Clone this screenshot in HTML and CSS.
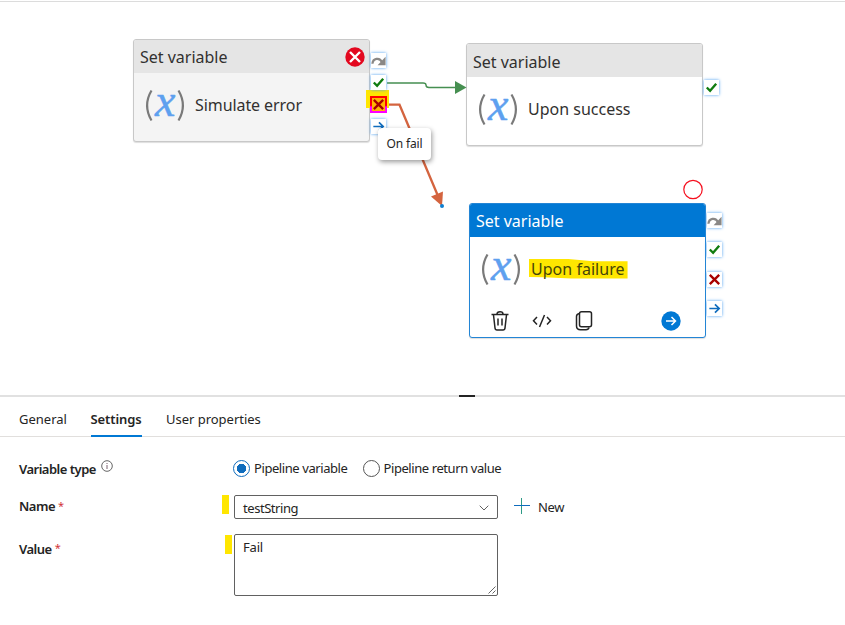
FILE: index.html
```
<!DOCTYPE html>
<html lang="en">
<head>
<meta charset="utf-8">
<title>Pipeline editor</title>
<link rel="stylesheet" href="styles.css">
</head>
<body>
<svg class="defs" width="0" height="0" aria-hidden="true">
  <symbol id="skip" viewBox="0 0 16 16"><path d="M1.500 11.500C2 5.500 9 4 12 10" fill="none" stroke="#8a8886" stroke-width="2.400"/><path d="M15.500 4V13H7Z" fill="#8a8886"/></symbol>
  <symbol id="check" viewBox="0 0 16 16"><path d="M3 8L6.500 11.500L13 4" fill="none" stroke="#107c10" stroke-width="2.500"/></symbol>
  <symbol id="cross" viewBox="0 0 16 16"><path d="M3 3L13 13M13 3L3 13" fill="none" stroke="#a80000" stroke-width="2.500"/></symbol>
  <symbol id="arrow" viewBox="0 0 16 16"><path d="M2.500 8H13M8.500 3.500L13 8L8.500 12.500" fill="none" stroke="#0f6cbd" stroke-width="1.800"/></symbol>
</svg>
<main class="canvas">
  <span class="marker marker-port"></span>
  <section class="node node-error">
    <header class="node-head">Set variable</header>
    <div class="node-body"><svg class="var-icon" viewBox="0 0 40 34"><path class="paren" d="M6.500 2.500Q-2.300 17.500 6.500 32.500M33.500 2.500Q42.300 17.500 33.500 32.500"/><text x="10" y="28" class="var-x">x</text></svg><span class="name-error">Simulate error</span></div>
    <svg class="error-badge" viewBox="0 0 20 20"><circle cx="10" cy="10" r="9.700" fill="#e3081f"/><path d="M5 5L15 15M15 5L5 15" stroke="#fff" stroke-width="2.400"/></svg>
  </section>
  <div class="ports ports-error">
    <svg class="port"><use href="#skip"/></svg>
    <svg class="port"><use href="#check"/></svg>
    <svg class="port port-active" viewBox="1 1 14 14"><use href="#cross" width="16" height="16"/></svg>
    <svg class="port"><use href="#arrow"/></svg>
  </div>
  <section class="node node-success">
    <header class="node-head">Set variable</header>
    <div class="node-body"><svg class="var-icon" viewBox="0 0 40 34"><path class="paren" d="M6.500 2.500Q-2.300 17.500 6.500 32.500M33.500 2.500Q42.300 17.500 33.500 32.500"/><text x="10" y="28" class="var-x">x</text></svg><span class="name-success">Upon success</span></div>
  </section>
  <div class="ports ports-success"><svg class="port"><use href="#check"/></svg></div>
  <svg class="wires" viewBox="0 0 845 395">
    <path d="M387 83H423Q426 83 426 85Q426 87.500 429 87.500H456" fill="none" stroke="#468f51" stroke-width="1.400"/>
    <path d="M455 81L466.500 87.500L455 94Z" fill="#468f51"/>
    <path d="M387 104.700H399.500L438 196" fill="none" stroke="#d4643f" stroke-width="2.300"/>
    <path d="M431 196.500L443 191.500L442 206Z" fill="#d4643f"/>
    <circle cx="442" cy="206" r="2" fill="#0f7fd0"/>
    <circle cx="693" cy="189.500" r="9.200" fill="none" stroke="#f5101f" stroke-width="1.200"/>
  </svg>
  <div class="tooltip">On fail</div>
  <section class="node node-failure">
    <header class="node-head">Set variable</header>
    <div class="node-body">
      <svg class="var-icon" viewBox="0 0 40 34"><path class="paren" d="M6.500 2.500Q-2.300 17.500 6.500 32.500M33.500 2.500Q42.300 17.500 33.500 32.500"/><text x="10" y="28" class="var-x">x</text></svg>
      <span class="name-failure">Upon failure</span>
    </div>
    <footer class="actions">
      <svg width="20" height="22" viewBox="0 0 20 22" fill="none" stroke="#242424" stroke-width="1.500"><path d="M1.500 4.500H18.500M7 4Q7 1.800 10 1.800Q13 1.800 13 4M3.500 5L5 18Q5.200 20 7 20H13Q14.800 20 15 18L16.500 5M8 8.500V15.500M12 8.500V15.500"/></svg>
      <svg width="20" height="22" viewBox="0 0 20 22" fill="none" stroke="#242424" stroke-width="1.500"><path d="M5 7L1.500 10.700L5 14.500M15 7L18.500 10.700L15 14.500M12.500 5L7.500 17"/></svg>
      <svg width="20" height="22" viewBox="0 0 20 22" fill="none" stroke="#242424" stroke-width="1.500"><rect x="5.500" y="1.800" width="12" height="15" rx="2"/><path d="M5.500 3.500Q2.500 4 2.500 6.500V16Q2.500 19.700 6.500 19.700H12Q14.500 19.700 15 17.500"/></svg>
      <svg class="go" width="20" height="22" viewBox="0 0 20 22"><circle cx="10" cy="11" r="9.700" fill="#0078d4"/><path d="M5 11H14.500M10.500 7L14.500 11L10.500 15" fill="none" stroke="#fff" stroke-width="1.500"/></svg>
    </footer>
  </section>
  <div class="ports ports-failure">
    <svg class="port"><use href="#skip"/></svg>
    <svg class="port"><use href="#check"/></svg>
    <svg class="port"><use href="#cross"/></svg>
    <svg class="port"><use href="#arrow"/></svg>
  </div>
</main>
<section class="panel">
  <div class="handle"></div>
  <nav class="tabs">
    <span class="tab tab-general">General</span>
    <span class="tab tab-active">Settings</span>
    <span class="tab tab-user">User properties</span>
  </nav>
  <form class="form">
    <div class="row row-type">
      <label class="label"><span class="label-type">Variable type</span><svg class="info" viewBox="0 0 12 12" fill="none" stroke="#555"><circle cx="6" cy="6" r="5.300" stroke-width=".9"/><path d="M6 5V9M6 3V4" stroke="#7c6270"/></svg></label>
      <div class="radios">
        <span class="radio checked"></span><span class="option opt-variable">Pipeline variable</span>
        <span class="radio second"></span><span class="option opt-return">Pipeline return value</span>
      </div>
    </div>
    <div class="row row-name">
      <label class="label"><span class="label-name">Name</span><i class="star">*</i></label>
      <div class="control">
        <span class="marker mark-name"></span>
        <div class="select"><span>testString</span><svg width="10" height="6" viewBox="0 0 10 6" fill="none" stroke="#616161"><path d="M.7 .7L5 5L9.300 .7"/></svg></div>
        <svg class="plus" viewBox="0 0 16 16" fill="none"><path d="M7.500 0V16" stroke="#2d9a86"/><path d="M0 7.500H16" stroke="#0f6cbd"/></svg>
        <span class="new">New</span>
      </div>
    </div>
    <div class="row row-value">
      <label class="label"><span class="label-value">Value</span><i class="star">*</i></label>
      <div class="control">
        <span class="marker mark-value"></span>
        <div class="area">Fail<svg class="grip" viewBox="0 0 8 8" stroke="#555" stroke-width=".9"><path d="M.5 7.500L7.500 .5M4.500 7.500L7.500 4.500"/></svg></div>
      </div>
    </div>
  </form>
</section>
</body>
</html>
```
FILE: styles.css
```
* { box-sizing: border-box; }
body { margin: 0; width: 845px; height: 625px; overflow: hidden; background: #fff; color: #242424; font: 13px/18px "Noto Sans", "Open Sans", sans-serif; }
svg { display: block; flex: none; }
.defs { position: absolute; }
.canvas { position: relative; height: 395px; border-top: 1px solid #fff; box-shadow: inset 0 1px #dcdcdc; }
.node, .ports, .wires, .tooltip, .marker-port { position: absolute; }
.wires { left: 0; top: -1px; width: 845px; height: 395px; }
.node { width: 237px; border: 1px solid #c8c8c8; border-radius: 3px; background: #fff; font-size: 16px; color: #323130; box-shadow: 0 1px 1px #0002; }
.node-head { height: 33px; padding-left: 6px; background: #e5e5e5; line-height: 34px; letter-spacing: -.01px; border-radius: 2px 2px 0 0; }
.node-body { display: flex; align-items: center; height: 64px; padding-left: 11px; white-space: nowrap; }
.var-icon { width: 40px; height: 34px; margin-right: 10px; overflow: visible; }
.var-x { font: italic 46px "Liberation Serif", serif; fill: #5ea0ef; stroke: #5ea0ef; stroke-width: .5px; }
.paren { fill: none; stroke: #7a7a7a; stroke-width: 2.2px; }
.node-error { left: 133px; top: 38px; height: 103px; background: #f4f4f4; }
.node-success { left: 466px; top: 42px; height: 103px; }
.node-success .node-head { line-height: 36px; }
.node-failure { left: 469px; top: 202px; height: 135px; width: 237px; border-color: #2385d5; }
.node-failure .node-head { background: #0078d4; color: #fff; }
.error-badge { position: absolute; width: 20px; height: 20px; right: 4px; top: 7px; }
.name-error, .name-success { margin-top: -1px; letter-spacing: -.08px; }
.name-success { letter-spacing: 0; }
.name-failure { position: relative; z-index: 0; height: 20px; padding: 0 3px 0 2px; margin: -1px 0 0 -2px; line-height: 21px; letter-spacing: .03px; color: #454408; }
.name-failure::before { content: ""; position: absolute; inset: 0; z-index: -1; background: #ffe600; clip-path: polygon(0 0, 40% 3%, 65% 14%, 100% 14%, 100% 100%, 43% 100%, 15% 94%, 0 92%); }
.actions { display: flex; gap: 22px; padding: 9px 0 0 20px; }
.go { margin-left: 45px; }
.ports { display: flex; flex-direction: column; }
.port { width: 15px; height: 15px; background: #fff; box-shadow: 0 0 3px #4b9ff0; }
.ports-error { left: 371px; top: 52px; gap: 7px; z-index: 2; }
.ports-success { left: 704px; top: 79px; }
.ports-failure { left: 707px; top: 212px; gap: 14.3px; }
.port-active { width: 17px; height: 17px; margin: -1px 0 -1px -1px; background: #ffb600; border: 2px solid #f00; border-image: linear-gradient(#f00 55%, #f0f 65%) 2; box-shadow: none; }
.marker { background: #ffe600; }
.marker-port { left: 366px; top: 89px; width: 23px; height: 18px; z-index: 1; }
.tooltip { left: 378px; top: 127px; width: 53px; height: 32px; z-index: 3; border-radius: 4px; background: #fff; box-shadow: 1px 2px 5px #0006; font-size: 12px; line-height: 31px; letter-spacing: -.15px; text-align: center; }
.panel { border-top: 2px solid #e1e1e1; }
.handle { width: 16px; height: 2px; margin: -2px 0 0 459px; background: #242424; }
.tabs { display: flex; height: 40px; padding-left: 19px; border-bottom: 1px solid #e1dfdd; line-height: 44px; }
.tab { white-space: nowrap; }
.tab-general { width: 72px; letter-spacing: 0; }
.tab-active { width: 51px; height: 40px; border-bottom: 2px solid #0078d4; font-weight: 600; letter-spacing: -.1px; text-indent: -.5px; }
.tab-user { margin-left: 24px; letter-spacing: -.02px; }
.form { padding-left: 19px; }
.row { display: flex; }
.row-type { height: 58px; padding-top: 22px; }
.row-name { height: 39px; }
.label { display: flex; width: 203px; font-weight: 600; letter-spacing: -.5px; }
.label > span { margin-top: 1px; }
.info { width: 12px; height: 12px; margin: 1px 0 0 5px; }
.star { margin: 1px 0 0 3px; color: #d13438; font-size: 11px; font-style: normal; font-weight: 400; }
.row-name .label { padding-top: 1px; }
.row-value .label { padding-top: 5px; }
.row-value .star { margin-top: 0; }
.radios { display: flex; margin-left: 11px; }
.radio { width: 17px; height: 17px; margin-top: 1px; border: 1px solid #555; border-radius: 50%; flex: none; }
.checked { border-color: #0f6cbd; background: radial-gradient(circle, #0f6cbd 4.5px, #fff 5px); }
.option { margin-left: 4px; white-space: nowrap; letter-spacing: -.42px; }
.opt-variable { width: 95px; }
.opt-return { margin-left: 3.5px; }
.second { margin-left: 14px; }
.control { display: flex; }
.control .marker { width: 7px; height: 19px; flex: none; }
.mark-value { margin: 1px 2px 0 3px; }
.mark-name { margin-right: 5px; }
.select { display: flex; align-items: center; justify-content: space-between; width: 264px; height: 24px; padding: 2px 8px 0; border: 1px solid #616161; border-radius: 2px; letter-spacing: -.45px; }
.plus { width: 16px; height: 16px; margin: 3px 0 0 16px; }
.new { margin: 3px 0 0 8px; letter-spacing: -.4px; }
.area { position: relative; width: 264px; height: 62px; padding: 3px 8px; border: 1px solid #616161; border-radius: 2px; letter-spacing: -.2px; }
.grip { position: absolute; right: 1px; bottom: 1px; width: 8px; height: 8px; }
```
